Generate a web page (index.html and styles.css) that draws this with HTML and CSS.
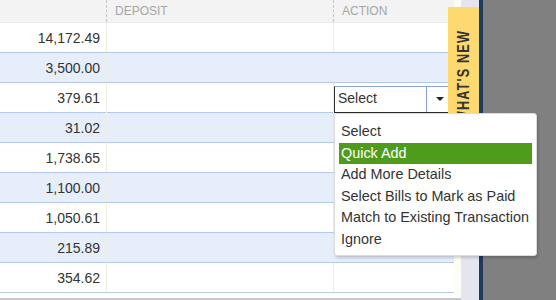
FILE: index.html
```html
<!DOCTYPE html>
<html lang="en">
<head>
    <meta charset="UTF-8">
    <title>Bank transactions</title>
    <link rel="stylesheet" href="styles.css">
</head>
<body>
    <section class="main">
        <div class="grid">
            <div class="head">
                <div class="th"></div>
                <div class="th">DEPOSIT</div>
                <div class="th">ACTION</div>
            </div>
            <div class="row"><div class="amt">14,172.49</div><div class="td"></div><div class="td"></div></div>
            <div class="row alt"><div class="amt">3,500.00</div><div class="td"></div><div class="td"></div></div>
            <div class="row"><div class="amt">379.61</div><div class="td"></div>
                <div class="td">
                    <div class="select">
                        <span class="value">Select</span>
                        <span class="arrow"></span>
                    </div>
                </div>
            </div>
            <div class="row alt"><div class="amt">31.02</div><div class="td"></div><div class="td"></div></div>
            <div class="row"><div class="amt">1,738.65</div><div class="td"></div><div class="td"></div></div>
            <div class="row alt"><div class="amt">1,100.00</div><div class="td"></div><div class="td"></div></div>
            <div class="row"><div class="amt">1,050.61</div><div class="td"></div><div class="td"></div></div>
            <div class="row alt"><div class="amt">215.89</div><div class="td"></div><div class="td"></div></div>
            <div class="row"><div class="amt">354.62</div><div class="td"></div><div class="td"></div></div>
        </div>
        <div class="spacer"></div>
    </section>
    <div class="rail"></div>
    <div class="edge"></div>
    <div class="fill"></div>

    <div class="tab"><span class="tab-text"><b>WHAT'S NEW</b></span></div>

    <ul class="menu">
        <li>Select</li>
        <li class="active">Quick Add</li>
        <li>Add More Details</li>
        <li>Select Bills to Mark as Paid</li>
        <li>Match to Existing Transaction</li>
        <li>Ignore</li>
    </ul>
</body>
</html>
```

FILE: styles.css
```css
body {
    margin: 0;
    height: 300px;
    overflow: hidden;
    display: flex;
    font-family: "Liberation Sans", Arial, sans-serif;
    color: #333;
    background-color: #808080;
}
.main {
    width: 461px;
    height: 300px;
    box-sizing: border-box;
    background-color: #fff;
    border-bottom: 2px solid #c9c9c9;
    display: flex;
}
.grid {
    width: 454px;
}
.spacer {
    flex: 1;
    background-color: #fdfdf7;
}
.head {
    display: grid;
    grid-template-columns: 106px 227px 1fr;
    height: 23px;
    background-color: #f3f3f3;
    border-bottom: 1px solid #ebebeb;
    box-sizing: border-box;
}
.th {
    font-size: 12px;
    color: #a6a6a6;
    padding: 4px 0 0 8px;
}
.th + .th {
    border-left: 1px dashed #c6c6c6;
}
.row {
    display: grid;
    grid-template-columns: 106px 227px 1fr;
    height: 30px;
    box-sizing: border-box;
    border-bottom: 1px solid #b7c9ea;
    background-color: #fff;
}
.row.alt {
    background-color: #e6eefc;
}
.amt {
    font-size: 14px;
    text-align: right;
    padding: 7px 6px 0 0;
}
.td {
    border-left: 1px solid #efefe0;
}
.select {
    margin: 3px 0 0 0;
    height: 27px;
    box-sizing: border-box;
    background-color: #fff;
    border-top: 1px solid #89a5d6;
    border-left: 1px solid #2b2b2b;
    border-bottom: 1px solid #2b2b2b;
    display: flex;
}
.value {
    width: 88px;
    font-size: 14px;
    padding: 3px 0 0 3px;
    border-right: 1px solid #89a5d6;
}
.arrow {
    width: 0;
    height: 0;
    margin: 10px 0 0 9px;
    border-left: 4px solid transparent;
    border-right: 4px solid transparent;
    border-top: 4px solid #222;
}
.rail {
    width: 18px;
    background-color: #e4e5ef;
}
.edge {
    width: 4px;
    background-color: #1f3a5a;
}
.fill {
    flex: 1;
}
.tab {
    position: absolute;
    left: 448px;
    top: 7px;
    width: 31px;
    height: 240px;
    overflow: hidden;
    background-color: #fdd970;
}
.tab-text {
    display: block;
    writing-mode: vertical-rl;
    transform: rotate(180deg);
    line-height: 31px;
    height: 197px;
    padding-bottom: 23px;
    text-align: right;
}
.tab-text b {
    display: inline-block;
    font-size: 16px;
    letter-spacing: 1.5px;
    color: #333;
    transform: scaleY(0.79);
    transform-origin: 50% 100%;
}
.menu {
    position: absolute;
    left: 334px;
    top: 113px;
    width: 203px;
    height: 143px;
    box-sizing: border-box;
    margin: 0;
    padding: 7px 4px 0 4px;
    list-style: none;
    background-color: #fff;
    border: 1px solid #dcdcdc;
    border-radius: 3px;
    box-shadow: 1px 2px 3px rgba(0, 0, 0, 0.18);
}
.menu li {
    font-size: 14.4px;
    line-height: 21.5px;
    padding-left: 2px;
    white-space: nowrap;
}
.menu li.active {
    background-color: #4f9b1b;
    color: #fff;
}
```
